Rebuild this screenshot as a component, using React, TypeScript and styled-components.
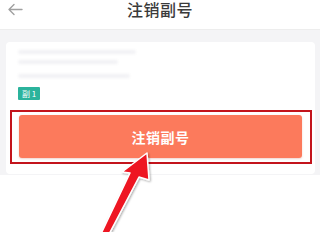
import styled, { createGlobalStyle } from "styled-components";

const GlobalStyle = createGlobalStyle`
  html, body {
    margin: 0;
    padding: 0;
    background: #ffffff;
    font-family: "Noto Sans CJK SC", "Noto Sans", sans-serif;
  }
`;

const Page = styled.div`
  position: relative;
  width: 320px;
  height: 232px;
  overflow: hidden;
  background: #ffffff;
`;

const Header = styled.header`
  height: 30px;
  display: flex;
  align-items: flex-start;
  justify-content: center;
  position: relative;
  border-bottom: 1px solid #ededed;
  box-sizing: border-box;
`;

const BackButton = styled.div`
  position: absolute;
  left: 7px;
  top: 3px;
  width: 16px;
  height: 14px;
  display: flex;
`;

const Title = styled.h1`
  margin: 0;
  font-size: 16px;
  line-height: 18px;
  font-weight: 500;
  color: #3a3a3a;
  letter-spacing: 0.5px;
`;

const Content = styled.section`
  background: #f4f4f6;
  padding: 12px 5px 1px 6px;
`;

const Card = styled.div`
  background: #ffffff;
  border-radius: 4px;
  padding: 8px 12px 10px;
  display: flex;
  flex-direction: column;
`;

const BlurLine = styled.div<{ $w: number; $mt: number }>`
  width: ${(p) => p.$w}px;
  height: 4px;
  margin-top: ${(p) => p.$mt}px;
  background: #f1f1f4;
  border-radius: 2px;
  filter: blur(1.5px);
`;

const Badge = styled.span`
  align-self: flex-start;
  margin-top: 9px;
  height: 13px;
  padding: 0 4px;
  background: #2bb39c;
  color: #ffffff;
  font-size: 8px;
  line-height: 13px;
  border-radius: 1px;
`;

const Highlight = styled.div`
  margin: 10px -9px 0 -8px;
  border: 2px solid #c3141c;
  padding: 3px 8px 4px 7px;
`;

const DangerButton = styled.button`
  width: 100%;
  height: 43px;
  border: none;
  border-radius: 3px;
  background: #fc7a5c;
  color: #ffffff;
  font-family: "Noto Sans CJK SC", sans-serif;
  font-size: 14px;
  font-weight: 700;
  letter-spacing: 0.5px;
  box-shadow: 0 1px 2px rgba(200, 80, 60, 0.25);
`;

const Overlay = styled.svg`
  position: absolute;
  left: 0;
  top: 0;
  pointer-events: none;
`;

export default function App() {
  return (
    <Page>
      <GlobalStyle />
      <Header>
        <BackButton>
          <svg width="16" height="14" viewBox="0 0 16 14">
            <path d="M15 6.5H2 M7 1.5 L2 6.5 L7 11.5" fill="none" stroke="#a0a0a0" strokeWidth="1.4" strokeLinecap="round" strokeLinejoin="round" />
          </svg>
        </BackButton>
        <Title>注销副号</Title>
      </Header>
      <Content>
        <Card>
          <BlurLine $w={118} $mt={0} />
          <BlurLine $w={100} $mt={6} />
          <BlurLine $w={112} $mt={10} />
          <Badge>副 1</Badge>
          <Highlight>
            <DangerButton>注销副号</DangerButton>
          </Highlight>
        </Card>
      </Content>
      <Overlay width="320" height="232" viewBox="0 0 320 232">
        <defs>
          <filter id="sh" x="-20%" y="-20%" width="140%" height="140%">
            <feDropShadow dx="1" dy="1" stdDeviation="1" floodColor="#000" floodOpacity="0.35" />
          </filter>
        </defs>
        <polygon
          points="147,153 149,180 139,177 107,238 99,238 130,173 122,172"
          fill="#ee1520"
          stroke="#ffffff"
          strokeWidth="1.5"
          strokeLinejoin="round"
          filter="url(#sh)"
        />
      </Overlay>
    </Page>
  );
}
